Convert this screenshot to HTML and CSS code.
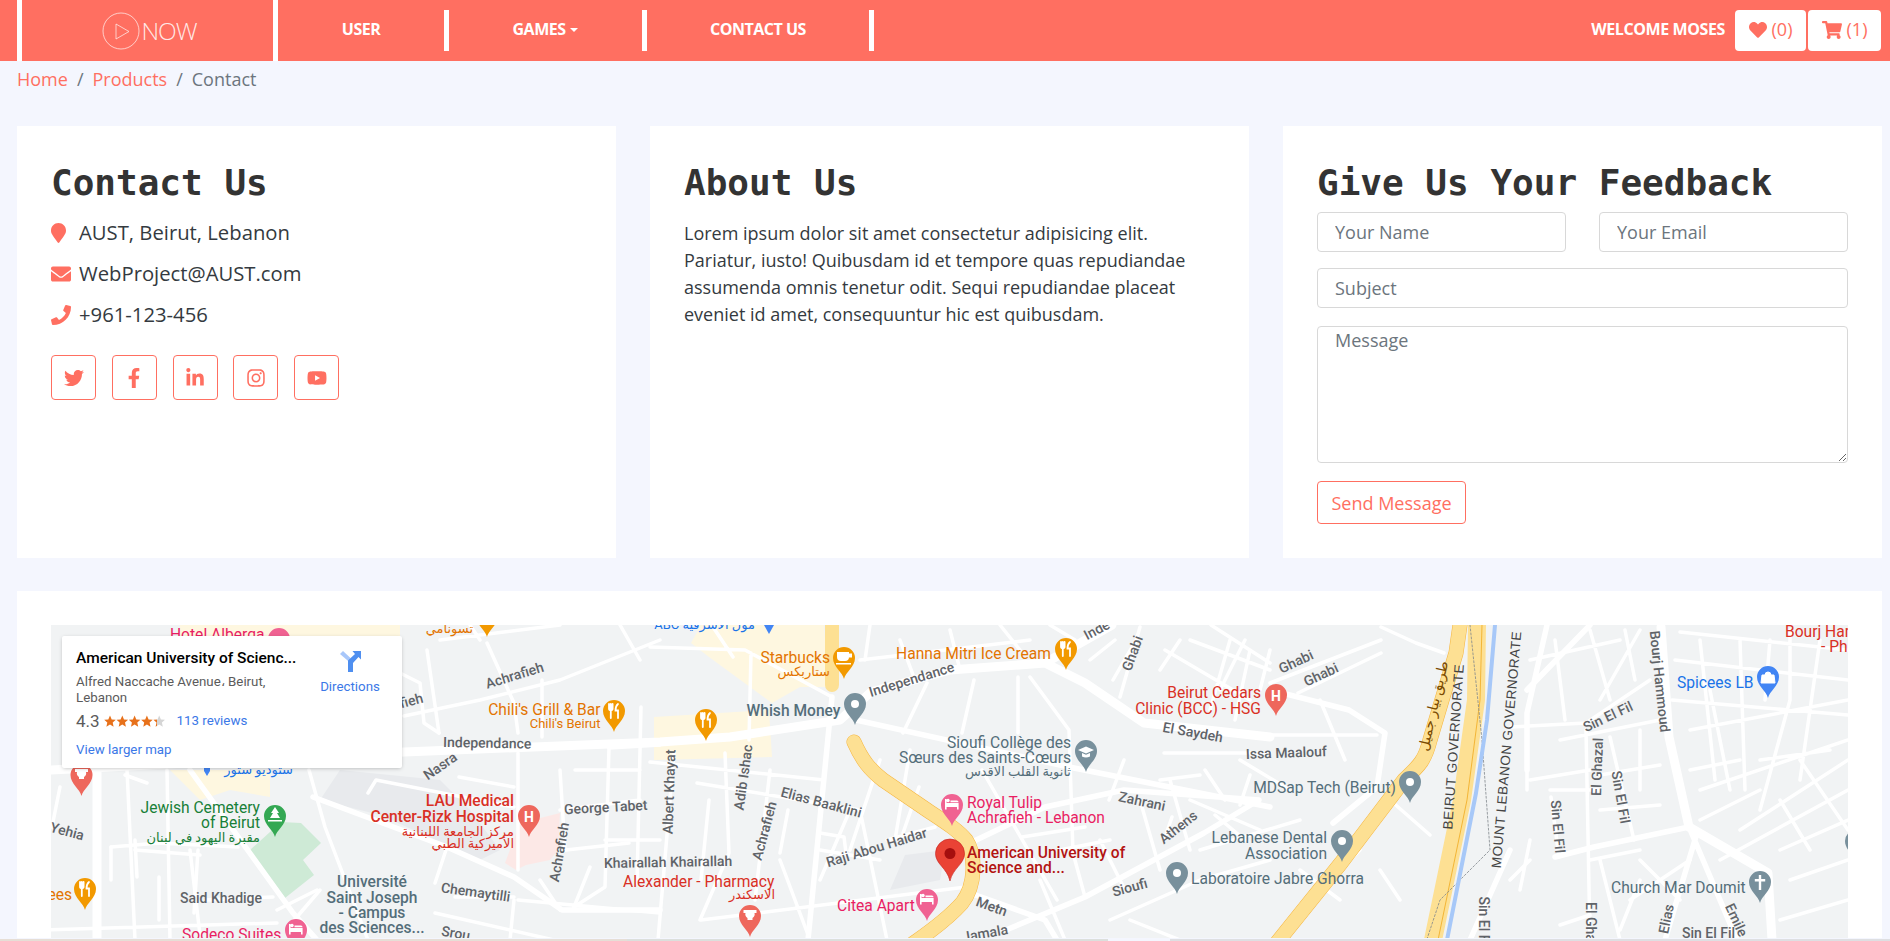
FILE: index.html
```html
<!DOCTYPE html>
<html lang="en">
<head>
    <meta charset="UTF-8">
    <meta name="viewport" content="width=device-width, initial-scale=1.0">
    <title>Contact</title>
    <link rel="stylesheet" href="styles.css">
</head>
<body>
    <svg class="defs" width="0" height="0">
        <symbol id="i-heart" viewBox="0 0 512 512"><path d="M462.3 62.6C407.5 15.9 326 24.3 275.7 76.2L256 96.5l-19.7-20.3C186.1 24.3 104.5 15.9 49.7 62.6c-62.8 53.6-66.1 149.8-9.9 207.9l193.5 199.8c12.5 12.9 32.8 12.9 45.3 0l193.5-199.8c56.3-58.1 53-154.3-9.8-207.9z"/></symbol>
        <symbol id="i-cart" viewBox="0 0 576 512"><path d="M528.12 301.319l47.273-208C578.806 78.301 567.391 64 551.99 64H159.208l-9.166-44.81C147.758 8.021 137.93 0 126.529 0H24C10.745 0 0 10.745 0 24v16c0 13.255 10.745 24 24 24h69.883l70.248 343.435C147.325 417.1 136 435.222 136 456c0 30.928 25.072 56 56 56s56-25.072 56-56c0-15.674-6.447-29.835-16.824-40h209.647C430.447 426.165 424 440.326 424 456c0 30.928 25.072 56 56 56s56-25.072 56-56c0-22.172-12.888-41.332-31.579-50.405l5.517-24.276c3.413-15.018-8.002-29.319-23.403-29.319H218.117l-6.545-32h293.145c11.206 0 20.92-7.754 23.403-18.681z"/></symbol>
        <symbol id="i-marker" viewBox="0 0 384 512"><path d="M172.268 501.67C26.97 291.031 0 268.413 0 192 0 85.961 85.961 0 192 0s192 85.961 192 192c0 76.413-26.97 99.031-172.268 309.67-9.535 13.774-29.93 13.773-39.464 0z"/></symbol>
        <symbol id="i-envelope" viewBox="0 0 512 512"><path d="M502.3 190.8c3.9-3.1 9.7-.2 9.7 4.7V400c0 26.5-21.5 48-48 48H48c-26.5 0-48-21.5-48-48V195.6c0-5 5.7-7.8 9.7-4.7 22.4 17.4 52.1 39.5 154.1 113.6 21.1 15.4 56.7 47.8 92.2 47.6 35.7.3 72-32.8 92.3-47.6 102-74.1 131.6-96.3 154-113.7zM256 320c23.2.4 56.6-29.2 73.4-41.4 132.7-96.3 142.8-104.7 173.4-128.7 5.8-4.5 9.2-11.5 9.2-18.9v-19c0-26.5-21.5-48-48-48H48C21.5 64 0 85.5 0 112v19c0 7.4 3.4 14.3 9.2 18.9 30.6 23.9 40.7 32.4 173.4 128.7 16.8 12.2 50.2 41.8 73.4 41.4z"/></symbol>
        <symbol id="i-phone" viewBox="0 0 512 512"><path d="M493.4 24.6l-104-24c-11.3-2.6-22.9 3.3-27.5 13.9l-48 112c-4.2 9.8-1.4 21.3 6.9 28l60.6 49.6c-36 76.7-98.9 140.5-177.2 177.2l-49.6-60.6c-6.8-8.3-18.2-11.1-28-6.9l-112 48C3.9 366.5-2 378.1.6 389.4l24 104C27.1 504.2 36.7 512 48 512c256.1 0 464-207.5 464-464 0-11.2-7.7-20.9-18.6-23.4z"/></symbol>
        <symbol id="i-twitter" viewBox="0 0 512 512"><path d="M459.37 151.716c.325 4.548.325 9.097.325 13.645 0 138.72-105.583 298.558-298.558 298.558-59.452 0-114.68-17.219-161.137-47.106 8.447.974 16.568 1.299 25.34 1.299 49.055 0 94.213-16.568 130.274-44.832-46.132-.975-84.792-31.188-98.112-72.772 6.498.974 12.995 1.624 19.818 1.624 9.421 0 18.843-1.3 27.614-3.573-48.081-9.747-84.143-51.98-84.143-102.985v-1.299c13.969 7.797 30.214 12.67 47.431 13.319-28.264-18.843-46.781-51.005-46.781-87.391 0-19.492 5.197-37.36 14.294-52.954 51.655 63.675 129.3 105.258 216.365 109.807-1.624-7.797-2.599-15.918-2.599-24.04 0-57.828 46.782-104.934 104.934-104.934 30.213 0 57.502 12.67 76.67 33.137 23.715-4.548 46.456-13.32 66.599-25.34-7.798 24.366-24.366 44.833-46.132 57.827 21.117-2.273 41.584-8.122 60.426-16.243-14.292 20.791-32.161 39.308-52.628 54.253z"/></symbol>
        <symbol id="i-facebook" viewBox="0 0 320 512"><path d="M279.14 288l14.22-92.66h-88.91v-60.13c0-25.35 12.42-50.06 52.24-50.06h40.42V6.26S260.43 0 225.36 0c-73.22 0-121.08 44.38-121.08 124.72v70.62H22.89V288h81.39v224h100.17V288z"/></symbol>
        <symbol id="i-linkedin" viewBox="0 0 448 512"><path d="M100.28 448H7.4V148.9h92.88zM53.79 108.1C24.09 108.1 0 83.5 0 53.8a53.79 53.79 0 0 1 107.58 0c0 29.7-24.1 54.3-53.79 54.3zM447.9 448h-92.68V302.4c0-34.7-.7-79.2-48.29-79.2-48.29 0-55.69 37.7-55.69 76.7V448h-92.78V148.9h89.08v40.8h1.3c12.4-23.5 42.69-48.3 87.88-48.3 94 0 111.28 61.9 111.28 142.3V448z"/></symbol>
        <symbol id="i-instagram" viewBox="0 0 448 512"><path d="M224.1 141c-63.6 0-114.9 51.3-114.9 114.9s51.3 114.9 114.9 114.9S339 319.5 339 255.9 287.7 141 224.1 141zm0 189.6c-41.1 0-74.7-33.5-74.7-74.7s33.5-74.7 74.7-74.7 74.7 33.5 74.7 74.7-33.6 74.7-74.7 74.7zm146.4-194.3c0 14.9-12 26.8-26.8 26.8-14.9 0-26.8-12-26.8-26.8s12-26.8 26.8-26.8 26.8 12 26.8 26.8zm76.1 27.2c-1.7-35.9-9.9-67.7-36.2-93.9-26.2-26.2-58-34.4-93.9-36.2-37-2.1-147.9-2.1-184.9 0-35.8 1.7-67.6 9.9-93.9 36.1s-34.4 58-36.2 93.9c-2.1 37-2.1 147.9 0 184.9 1.7 35.9 9.9 67.7 36.2 93.9s58 34.4 93.9 36.2c37 2.1 147.9 2.1 184.9 0 35.9-1.7 67.7-9.9 93.9-36.2 26.2-26.2 34.4-58 36.2-93.9 2.1-37 2.1-147.8 0-184.8zM398.8 388c-7.8 19.6-22.9 34.7-42.6 42.6-29.5 11.7-99.5 9-132.1 9s-102.7 2.6-132.1-9c-19.6-7.8-34.7-22.9-42.6-42.6-11.7-29.5-9-99.5-9-132.1s-2.6-102.7 9-132.1c7.8-19.6 22.9-34.7 42.6-42.6 29.5-11.7 99.5-9 132.1-9s102.7-2.6 132.1 9c19.6 7.8 34.7 22.9 42.6 42.6 11.7 29.5 9 99.5 9 132.1s2.7 102.7-9 132.1z"/></symbol>
        <symbol id="i-youtube" viewBox="0 0 576 512"><path d="M549.655 124.083c-6.281-23.65-24.787-42.276-48.284-48.597C458.781 64 288 64 288 64S117.22 64 74.629 75.486c-23.497 6.322-42.003 24.947-48.284 48.597-11.412 42.867-11.412 132.305-11.412 132.305s0 89.438 11.412 132.305c6.281 23.65 24.787 41.5 48.284 47.821C117.22 448 288 448 288 448s170.78 0 213.371-11.486c23.497-6.321 42.003-24.171 48.284-47.821 11.412-42.867 11.412-132.305 11.412-132.305s0-89.438-11.412-132.305zm-317.51 213.508V175.185l142.739 81.205-142.739 81.201z"/></symbol>
    </svg>

    <nav class="topbar">
        <a class="brand" href="#">
            <svg class="brand-mark" viewBox="0 0 38 40"><circle cx="19" cy="20" r="18"/><path d="M14 13l13 7.500-13 7.500z"/></svg>
            <span class="brand-name">NOW</span>
        </a>
        <a class="nav-link nav-user" href="#">USER</a>
        <a class="nav-link nav-games" href="#">GAMES<span class="caret"></span></a>
        <a class="nav-link nav-contact" href="#">CONTACT US</a>
        <div class="nav-right">
            <span class="welcome">WELCOME MOSES</span>
            <a class="count-btn heart-btn" href="#"><svg class="ico-18"><use href="#i-heart"/></svg> (0)</a>
            <a class="count-btn cart-btn" href="#"><svg class="ico-cart"><use href="#i-cart"/></svg> (1)</a>
        </div>
    </nav>

    <div class="crumbs">
        <a href="#">Home</a><span class="sep">/</span><a href="#">Products</a><span class="sep">/</span><span class="now">Contact</span>
    </div>

    <main class="content">
        <section class="cards">
            <div class="card">
                <h2>Contact Us</h2>
                <div class="info-row"><span class="info-ico"><svg class="ico-marker"><use href="#i-marker"/></svg></span>AUST, Beirut, Lebanon</div>
                <div class="info-row"><span class="info-ico"><svg class="ico-20"><use href="#i-envelope"/></svg></span>WebProject@AUST.com</div>
                <div class="info-row"><span class="info-ico"><svg class="ico-20"><use href="#i-phone"/></svg></span>+961-123-456</div>
                <div class="socials">
                    <a href="#"><svg class="ico-20"><use href="#i-twitter"/></svg></a>
                    <a href="#"><svg class="ico-20"><use href="#i-facebook"/></svg></a>
                    <a href="#"><svg class="ico-20"><use href="#i-linkedin"/></svg></a>
                    <a href="#"><svg class="ico-20"><use href="#i-instagram"/></svg></a>
                    <a href="#"><svg class="ico-20"><use href="#i-youtube"/></svg></a>
                </div>
            </div>
            <div class="card">
                <h2>About Us</h2>
                <p class="about">Lorem ipsum dolor sit amet consectetur adipisicing elit. Pariatur, iusto! Quibusdam id et tempore quas repudiandae assumenda omnis tenetur odit. Sequi repudiandae placeat eveniet id amet, consequuntur hic est quibusdam.</p>
            </div>
            <div class="card">
                <h2>Give Us Your Feedback</h2>
                <form class="feedback">
                    <div class="two-col">
                        <input type="text" placeholder="Your Name">
                        <input type="text" placeholder="Your Email">
                    </div>
                    <input type="text" placeholder="Subject">
                    <textarea placeholder="Message"></textarea>
                    <button type="button">Send Message</button>
                </form>
            </div>
        </section>

        <section class="map-card">
            <div class="map">
                <svg class="map-svg" viewBox="51 625 1797 314" width="1797" height="314">
                    <defs>
                        <path id="pin" d="M0 20C-1.500 13-11 8-11-1A11 11 0 1 1 11-1C11 8 1.500 13 0 20Z"/>
                        <g id="food" fill="none" stroke="#fff" stroke-width="1.800" stroke-linecap="round"><path d="M-5-7v4.500q0 2 1.800 2v7.500M-3.200-7v5M-1.400-7v4.500q0 2-1.800 2M4-7q-2.500 2-2.500 6.500h2.500v7.500"/></g>
                        <g id="bed" fill="#fff"><path d="M-7-6h1.600v4h12v6.500h-1.600v-2.500h-10.400v2.500h-1.600zM-4-2.800a1.700 1.700 0 1 1 .1 0zM-1.500-4.500h6.500a2 2 0 0 1 1.600 1.700h-8.100z"/></g>
                    </defs>
                    <rect x="51" y="625" width="1797" height="314" fill="#f1f3f4"/>
                    <path class="area-cream" d="M691 643L701 625H824L828 687H800L772 703 709 657ZM654 717L769 710 772 757 654 760ZM170 770H270V797L230 790 200 800ZM180 625H400V640H180Z"/>
                    <path class="area-park" d="M250 850L281 822 301 823 321 843 303 860 314 875 285 898Z"/>
                    <path class="area-hosp" d="M505 863L520 823 560 813 558 850 550 860 526 865 516 870Z"/>
                    <path class="area-grey" d="M320 800L340 770 440 780 470 810 500 850 480 860 380 815ZM905 855L945 850 940 880 890 890Z"/>

                    <path class="st-sm" d="M111 847L159 843 238 847M127 770L135 940M167 770L170 940M309 770L325 827 368 940M368 793L376 780 514 807M447 847L435 883M609 748L605 887 574 907M427 650L439 733M487 643L514 703 518 733M542 680V737M641 707L637 883M514 900L510 940M435 913L554 940M40 930L277 923M60 787L52 827M135 850L200 855M190 850L200 935M320 890L290 925M518 753V870M560 770L565 850M560 810L640 800M575 770H640M605 840H660M540 880L560 910M470 625L480 640M440 640L560 625M620 625L640 660"/>
                    <path class="st-sm" d="M125 775L147 783M159 877V920M111 847V880M135 840L137 877M198 850L194 913M206 900L273 897M277 910L317 890M459 777L514 787M400 673L420 683 424 723 439 733M455 897H514M518 900L660 913M609 748L660 745M590 867L574 907M566 850L629 843M404 716L480 700 560 680 660 640"/>
                    <path class="st-sm" d="M650 647L745 650 832 697M751 653L749 740M713 627L733 657M650 762L824 780M697 783L860 810 887 940M674 753L658 940M725 753L729 853 700 920M770 770L755 900M701 920L966 887M974 680L962 733M927 683L903 733M1018 677V733M1030 677L1069 730 1073 853M982 770L1057 900M1124 760L1109 800M1164 753H1270M1113 680L1136 640M1140 627L1120 697M1211 625L1270 663M1000 625L1020 650M1050 625L1075 640M860 660L1030 640M870 625L865 660M1165 650L1250 700M1190 640L1270 670M1230 640L1210 710M1250 650L1235 720M880 760L850 850M910 750L895 840M850 810L820 880M820 850L880 860M1100 840L1125 890M1140 800L1160 870M1170 780L1190 850M1190 800L1260 830M1200 850L1300 820M1110 920L1200 880 1270 860M1130 920L1180 940M1060 850L1110 840M1040 880L1065 940M780 860L810 940"/>
                    <path class="st-sm" d="M709 800L701 880M788 810L780 853M820 833L844 837 846 853M919 787L903 833M887 840L935 827M1022 837L1085 827M1073 853L1085 897M1172 817L1164 840M1160 780L1200 775M1215 815L1245 840M1205 770L1225 800M1240 805L1250 775M1220 690L1245 640M1180 640L1160 670M1260 690L1270 650M900 640L915 680M950 630L960 670M1090 660L1115 640"/>
                    <path class="st-sm" d="M1381 627L1416 643 1444 653M1270 683L1381 640M1298 693L1381 653M1270 735H1377M1320 700L1345 760M1390 800L1430 835M1240 760L1290 790M1300 870L1340 900M1380 870L1400 900M1360 850L1330 880M1511 727L1586 723 1650 680M1551 797L1559 857M1586 730L1590 940M1610 737L1634 840M1527 770V790M1530 660L1620 640M1640 630L1600 700M1555 640L1565 720M1590 630L1610 700M1625 630L1635 680M1560 740L1660 720M1530 780L1590 770M1600 775L1660 765M1600 810L1660 805M1590 860L1640 850M1640 860L1680 900M1630 900L1690 860M1560 925L1590 915M1550 790L1600 790M1640 730V790"/>
                    <path class="st-sm" d="M1680 632L1848 650M1675 660L1848 680M1672 700L1848 715M1690 730L1848 700M1700 640L1715 780M1740 640L1745 790M1790 630V700L1760 810M1820 640L1800 780M1700 790L1848 740M1720 860L1848 790M1740 830L1848 760M1780 800L1810 850M1800 760L1848 830M1790 880L1848 860M1780 920L1848 900M1710 690L1730 790M1770 640L1765 700M1690 770L1740 760M1760 760L1830 750M1700 820L1760 790M1780 850L1848 820M1600 860L1620 940M1640 880L1620 930M1510 880L1530 860M1530 840L1520 890"/>
                    <path class="st-md" d="M190 770L293 913 317 940M313 797L447 847 514 877 562 910 660 910M856 720L1069 767 1270 807M832 697L808 940M970 843L1045 807 1124 790 1259 800 1204 833 1085 897 1006 930M970 893L1045 920 1057 940M1270 690L1349 710 1385 733 1377 787 1333 823M1527 713V770M1689 827L1737 940M1697 833L1665 940M1689 827L1594 847 1555 857M1510 850L1470 940M1547 625L1527 713M1590 625L1527 690"/>
                    <path class="st-lg" d="M51 770L404 752 660 742 730 737 840 720 871 692 950 670 1045 663 1112 625M97 767V940M1045 663L1085 683 1144 723 1270 737M1661 627L1669 737 1689 827 1768 873 1772 940"/>

                    <path class="route-edge" d="M854 742C862 760 870 770 883 780L927 810C945 822 958 830 966 840 976 855 976 885 962 903 945 922 925 935 911 945M1275 945L1341 863 1404 780C1420 765 1425 760 1430 740L1456 653 1460 625"/>
                    <path class="route" d="M854 742C862 760 870 770 883 780L927 810C945 822 958 830 966 840 976 855 976 885 962 903 945 922 925 935 911 945M832 625V685M1275 945L1341 863 1404 780C1420 765 1425 760 1430 740L1456 653 1460 625"/>
                    <path class="route route-wide" d="M1432 945L1462 800 1476 700 1477 625"/>
                    <path class="route-line" d="M1437 945L1467 800 1480 700 1482 625"/>
                    <path class="border-dash" d="M1470 625L1482 740 1490 850 1440 900 1425 945"/>
                    <path class="river" d="M1446 945L1476 793 1487 720 1495 625"/>

                    <g class="lb-road">
                        <text x="443" y="747" transform="rotate(1 443 747)">Independance</text>
                        <text transform="translate(516 680) rotate(-17)" text-anchor="middle">Achrafieh</text>
                        <text transform="translate(395 710) rotate(-15)" text-anchor="middle">Achrafieh</text>
                        <text transform="translate(443 770) rotate(-35)" text-anchor="middle">Nasra</text>
                        <text transform="translate(66 836) rotate(15)" text-anchor="middle">Yehia</text>
                        <text x="180" y="903">Said Khadige</text>
                        <text transform="translate(606 812) rotate(-3)" text-anchor="middle">George Tabet</text>
                        <text transform="translate(564 853) rotate(-80)" text-anchor="middle">Achrafieh</text>
                        <text x="604" y="868" transform="rotate(-1 604 868)">Khairallah Khairallah</text>
                        <text transform="translate(475 897) rotate(8)" text-anchor="middle">Chemaytilli</text>
                        <text transform="translate(455 938) rotate(10)" text-anchor="middle">Srou</text>
                        <text transform="translate(913 684) rotate(-17)" text-anchor="middle">Independance</text>
                        <text transform="translate(1099 634) rotate(-28)" text-anchor="middle">Inde</text>
                        <text transform="translate(1137 655) rotate(-70)" text-anchor="middle">Ghabi</text>
                        <text transform="translate(1298 666) rotate(-25)" text-anchor="middle">Ghabi</text>
                        <text transform="translate(1323 679) rotate(-25)" text-anchor="middle">Ghabi</text>
                        <text transform="translate(1192 737) rotate(10)" text-anchor="middle">El Saydeh</text>
                        <text transform="translate(674 792) rotate(-88)" text-anchor="middle">Albert Khayat</text>
                        <text transform="translate(748 778) rotate(-82)" text-anchor="middle">Adib Ishac</text>
                        <text transform="translate(769 832) rotate(-75)" text-anchor="middle">Achrafieh</text>
                        <text transform="translate(820 807) rotate(15)" text-anchor="middle">Elias Baaklini</text>
                        <text x="1246" y="759" transform="rotate(-2 1246 759)">Issa Maalouf</text>
                        <text transform="translate(1141 806) rotate(12)" text-anchor="middle">Zahrani</text>
                        <text transform="translate(1181 831) rotate(-38)" text-anchor="middle">Athens</text>
                        <text transform="translate(878 852) rotate(-17)" text-anchor="middle">Raji Abou Haidar</text>
                        <text transform="translate(1131 892) rotate(-15)" text-anchor="middle">Sioufi</text>
                        <text transform="translate(990 911) rotate(20)" text-anchor="middle">Metn</text>
                        <text transform="translate(986 938) rotate(-10)" text-anchor="middle">Jamala</text>
                        <text transform="translate(1655 682) rotate(84)" text-anchor="middle">Bourj Hammoud</text>
                        <text transform="translate(1610 721) rotate(-25)" text-anchor="middle">Sin El Fil</text>
                        <text transform="translate(1602 767) rotate(-88)" text-anchor="middle">El Ghazal</text>
                        <text transform="translate(1616 798) rotate(80)" text-anchor="middle">Sin El Fil</text>
                        <text transform="translate(1553 827) rotate(85)" text-anchor="middle">Sin El Fil</text>
                        <text transform="translate(1671 920) rotate(-78)" text-anchor="middle">Elias</text>
                        <text transform="translate(1732 922) rotate(65)" text-anchor="middle">Emile</text>
                        <text transform="translate(1479 923) rotate(90)" text-anchor="middle">Sin El Fil</text>
                        <text transform="translate(1586 922) rotate(90)" text-anchor="middle">El Gha</text>
                        <text x="1682" y="938">Sin El Fil</text>
                    </g>
                    <g class="lb-gov">
                        <text transform="translate(1458 747) rotate(-86)" text-anchor="middle">BEIRUT GOVERNORATE</text>
                        <text transform="translate(1511 750) rotate(-85)" text-anchor="middle">MOUNT LEBANON GOVERNORATE</text>
                    </g>
                    <text class="lb-hwy" transform="translate(1438 707) rotate(-77)" text-anchor="middle">طريق بيار جميل</text>

                    <g class="lb-poi lb-slate">
                        <text x="840.500" y="716" text-anchor="end" class="lb-med">Whish Money</text>
                        <text x="1071" y="748" text-anchor="end">Sioufi Collège des</text>
                        <text x="1071" y="763" text-anchor="end">Sœurs des Saints-Cœurs</text>
                        <text x="1071" y="776" text-anchor="end" class="lb-small">ثانوية القلب الاقدس</text>
                        <text x="1396" y="793" text-anchor="end">MDSap Tech (Beirut)</text>
                        <text x="1327" y="843" text-anchor="end">Lebanese Dental</text>
                        <text x="1327" y="859" text-anchor="end">Association</text>
                        <text x="1191" y="884">Laboratoire Jabre Ghorra</text>
                        <text x="1611" y="893">Church Mar Doumit</text>
                        <text x="372" y="887" text-anchor="middle" class="lb-med">Université</text>
                        <text x="372" y="903" text-anchor="middle" class="lb-med">Saint Joseph</text>
                        <text x="372" y="918" text-anchor="middle" class="lb-med">- Campus</text>
                        <text x="372" y="933" text-anchor="middle" class="lb-med">des Sciences...</text>
                    </g>
                    <g class="lb-poi lb-orange">
                        <text x="600.500" y="715" text-anchor="end">Chili's Grill &amp; Bar</text>
                        <text x="600.500" y="728" text-anchor="end" class="lb-small">Chili's Beirut</text>
                        <text x="473" y="633" text-anchor="end" class="lb-small">تسونامي</text>
                        <text x="72" y="900" text-anchor="end">ees</text>
                        <text x="830" y="663" text-anchor="end">Starbucks</text>
                        <text x="830" y="676" text-anchor="end" class="lb-small">ستاربكس</text>
                        <text x="1051" y="659" text-anchor="end">Hanna Mitri Ice Cream</text>
                    </g>
                    <g class="lb-poi lb-pink">
                        <text x="170" y="640">Hotel Alberga</text>
                        <text x="182" y="940">Sodeco Suites</text>
                        <text x="967" y="808">Royal Tulip</text>
                        <text x="967" y="823">Achrafieh - Lebanon</text>
                        <text x="837" y="911">Citea Apart</text>
                    </g>
                    <g class="lb-poi lb-red">
                        <text x="514" y="806" text-anchor="end" class="lb-med">LAU Medical</text>
                        <text x="514" y="822" text-anchor="end" class="lb-med">Center-Rizk Hospital</text>
                        <text x="514" y="836" text-anchor="end" class="lb-small">مركز الجامعة اللبنانية</text>
                        <text x="514" y="848" text-anchor="end" class="lb-small">الأميركية الطبي</text>
                        <text x="623" y="887">Alexander - Pharmacy</text>
                        <text x="775" y="899" text-anchor="end" class="lb-small">الاسكندر</text>
                        <text x="1261" y="698" text-anchor="end">Beirut Cedars</text>
                        <text x="1261" y="714" text-anchor="end">Clinic (BCC) - HSG</text>
                        <text x="1785" y="637">Bourj Hammoud</text>
                        <text x="1821" y="652">- Pharmacy</text>
                    </g>
                    <g class="lb-poi lb-green">
                        <text x="260" y="813" text-anchor="end">Jewish Cemetery</text>
                        <text x="260" y="828" text-anchor="end">of Beirut</text>
                        <text x="260" y="842" text-anchor="end" class="lb-small">مقبرة اليهود في لبنان</text>
                    </g>
                    <g class="lb-poi lb-blue">
                        <text x="1677" y="688">Spicees LB</text>
                        <text x="755" y="629" text-anchor="end" class="lb-small">ABC مول الاشرفية</text>
                        <text x="293" y="774" text-anchor="end" class="lb-small">ستوديو ستور</text>
                    </g>
                    <text class="lb-poi lb-dark lb-med" x="967" y="858">American University of</text>
                    <text class="lb-poi lb-dark lb-med" x="967" y="873">Science and...</text>

                    <!-- pins -->
                    <g class="pin-orange">
                        <use href="#pin" x="487" y="617"/>
                        <use href="#pin" x="614" y="712"/><use href="#food" x="614" y="711"/>
                        <use href="#pin" x="85" y="890"/><use href="#food" x="85" y="889"/>
                        <use href="#pin" x="844" y="659"/><path d="M837 652h12v5q0 4-4 4h-4q-4 0-4-4zM849 653.500h3v4h-3zM836 663h15v1.500h-15z" fill="#fff"/>
                        <use href="#pin" x="1066" y="650"/><use href="#food" x="1066" y="649"/>
                        <use href="#pin" x="706" y="721"/><use href="#food" x="706" y="720"/>
                    </g>
                    <g class="pin-slate">
                        <use href="#pin" x="855" y="705"/><circle cx="855" cy="704" r="4" fill="#fff"/>
                        <use href="#pin" x="1086" y="752"/><path d="M1078 750l8-3.500 8 3.500-8 3.500zM1082 753v3.500q4 2 8 0V753l-4 1.800z" fill="#fff"/>
                        <use href="#pin" x="1177" y="874"/><circle cx="1177" cy="873" r="4" fill="#fff"/>
                        <use href="#pin" x="1410" y="783"/><circle cx="1410" cy="782" r="4" fill="#fff"/>
                        <use href="#pin" x="1342" y="842"/><circle cx="1342" cy="841" r="4" fill="#fff"/>
                        <use href="#pin" x="1760" y="883"/><path d="M1758.800 875h2.400v4h4v2.400h-4v8.600h-2.400v-8.600h-4v-2.400h4z" fill="#fff"/>
                        <use href="#pin" x="1856" y="842"/>
                    </g>
                    <g class="pin-pink">
                        <use href="#pin" x="279" y="640"/>
                        <use href="#pin" x="296" y="931"/><use href="#bed" x="296" y="930"/>
                        <use href="#pin" x="952" y="806"/><use href="#bed" x="952" y="805"/>
                        <use href="#pin" x="927" y="901"/><use href="#bed" x="927" y="900"/>
                    </g>
                    <g class="pin-red">
                        <use href="#pin" x="81.500" y="776"/><path d="M75 769h13v3h-2a4.500 4.500 0 0 1-2 5v2h-5v-2a4.500 4.500 0 0 1-2-5h-2z" fill="#fff"/>
                        <use href="#pin" x="750" y="917"/><path d="M743.500 910h13v3h-2a4.500 4.500 0 0 1-2 5v2h-5v-2a4.500 4.500 0 0 1-2-5h-2z" fill="#fff"/>
                        <use href="#pin" x="529" y="817"/><text class="pin-h" x="529" y="822" text-anchor="middle">H</text>
                        <use href="#pin" x="1276" y="696"/><text class="pin-h" x="1276" y="701" text-anchor="middle">H</text>
                    </g>
                    <use href="#pin" x="275" y="817" fill="#34a853"/>
                    <path d="M275 807l4 6h-2l3 5h-10l3-5h-2zM268 820h14v1.500h-14z" fill="#fff"/>
                    <use href="#pin" x="1768" y="678" fill="#4285f4"/>
                    <path d="M1762 675h12l1 8h-14zM1765 675a3 3 0 0 1 6 0" fill="#fff" stroke="#fff"/>
                    <path d="M204 765v6l3 5 3-5v-6z" fill="#4285f4"/>
                    <path d="M769 625h-5l5 9 5-9z" fill="#4285f4"/>
                    <!-- selected place -->
                    <path d="M950 881C947 868 935.500 864 935.500 853.500A14.500 14.500 0 1 1 964.500 853.500C964.500 864 953 868 950 881Z" fill="#ea4335" stroke="#c5221f" stroke-width=".6"/>
                    <circle cx="950" cy="853.500" r="5.500" fill="#a50e0e"/>
                </svg>

                <div class="place-box">
                    <div class="place-main">
                        <div class="place-title">American University of Scienc...</div>
                        <div class="place-addr">Alfred Naccache Avenue، Beirut, Lebanon</div>
                        <div class="place-rate">
                            <span class="rate-num">4.3</span>
                            <svg class="stars" viewBox="0 0 62 12">
                                <defs><linearGradient id="half"><stop offset="30%" stop-color="#e7711b"/><stop offset="30%" stop-color="#d5d5d5"/></linearGradient></defs>
                                <path id="star" d="M6 .500l1.700 3.900 4.100.4-3.100 2.800.9 4.100L6 9.500l-3.600 2.200.9-4.100L.2 4.800l4.100-.4z" fill="#e7711b"/>
                                <use href="#star" x="12.300"/><use href="#star" x="24.600"/><use href="#star" x="36.900"/>
                                <path d="M55.200.500l1.700 3.900 4.100.4-3.100 2.800.9 4.100-3.600-2.200-3.600 2.200.9-4.100-3.100-2.800 4.100-.4z" fill="url(#half)"/>
                            </svg>
                            <a class="map-link rev" href="#">113 reviews</a>
                        </div>
                        <a class="map-link larger" href="#">View larger map</a>
                    </div>
                    <a class="place-dir" href="#">
                        <svg class="dir-ico" viewBox="0 0 21 21"><path d="M0 3l3-3 7.500 7V12z" fill="#a8c7fa"/><path d="M8 21V9.500L15 3 12.500 0H21V8.500l-2.500-2.500L13 12v9z" fill="#4f8ff0"/></svg>
                        <span class="map-link">Directions</span>
                    </a>
                </div>
            </div>
        </section>
    </main>
    <div class="bottom-edge"></div>
</body>
</html>
```

FILE: styles.css
```css
* {
    box-sizing: border-box;
}
html, body {
    height: 100%;
}
body {
    font-family: "Open Sans", Arial, sans-serif;
    font-size: 18px;
    line-height: 27px;
    color: #343a40;
    background-color: #f4f6fe;
    margin: 0;
    padding: 0;
    overflow: hidden;
    position: relative;
}
a {
    text-decoration: none;
    color: inherit;
}
.defs {
    position: absolute;
}
svg {
    fill: currentColor;
}

/* barre du haut */
.topbar {
    background-color: #ff6f61;
    height: 61px;
    display: flex;
    align-items: center;
    padding: 0 9px 0 17px;
    color: #fff;
}
.brand {
    align-self: stretch;
    width: 261px;
    border-left: 5px solid #fff;
    border-right: 5px solid #fff;
    display: flex;
    align-items: center;
    justify-content: center;
}
.brand-mark {
    width: 38px;
    height: 40px;
    fill: none;
    stroke: rgba(255, 255, 255, 0.65);
    stroke-width: 1;
    margin-left: 4px;
}
.brand-name {
    font-size: 24.500px;
    font-weight: 300;
    letter-spacing: -1px;
    margin-left: 1px;
    color: rgba(255, 255, 255, 0.85);
}
.nav-link {
    height: 41px;
    border-right: 5px solid #fff;
    display: flex;
    align-items: center;
    justify-content: center;
    padding-bottom: 2px;
    font-size: 16px;
    font-weight: 700;
    letter-spacing: -0.5px;
}
.nav-user {
    width: 171px;
}
.nav-games {
    width: 198px;
}
.nav-contact {
    width: 227px;
}
.caret {
    border-top: 4px solid #fff;
    border-left: 4px solid transparent;
    border-right: 4px solid transparent;
    margin-left: 5px;
}
.nav-right {
    margin-left: auto;
    display: flex;
    align-items: center;
}
.welcome {
    font-size: 16px;
    font-weight: 700;
    letter-spacing: -0.4px;
    margin-right: 10px;
    padding-bottom: 2px;
}
.count-btn {
    height: 41px;
    background-color: #fff;
    color: #ff6f61;
    border-radius: 4px;
    display: flex;
    align-items: center;
    justify-content: center;
    gap: 5px;
    padding-bottom: 2px;
}
.heart-btn {
    width: 71px;
    margin-right: 2px;
}
.cart-btn {
    width: 73px;
}
.ico-18 {
    width: 18px;
    height: 18px;
}
.ico-cart {
    width: 20px;
    height: 18px;
}

/* fil d'ariane */
.crumbs {
    height: 65px;
    padding: 5px 0 0 17px;
    color: #6c757d;
}
.crumbs a {
    color: #ff6f61;
}
.crumbs .sep {
    padding: 0 9px;
}

/* cartes */
.content {
    padding: 0 8px 0 17px;
}
.cards {
    display: grid;
    grid-template-columns: repeat(3, 1fr);
    gap: 34px;
}
.card {
    background-color: #fff;
    padding: 35px 34px 34px 34px;
    height: 432px;
}
h2 {
    font-family: "DejaVu Sans Mono", "Liberation Mono", monospace;
    font-size: 36px;
    font-weight: 700;
    line-height: 43px;
    color: #333;
    margin: 0 0 8px 0;
}
.info-row {
    height: 41px;
    display: flex;
    align-items: center;
    font-size: 20.250px;
}
.info-ico {
    width: 28px;
    display: flex;
    color: #ff6f61;
}
.ico-marker {
    width: 15px;
    height: 20px;
}
.ico-20 {
    width: 20px;
    height: 20px;
}
.socials {
    display: flex;
    gap: 15.750px;
    margin-top: 20px;
}
.socials a {
    width: 45px;
    height: 45px;
    border: 1px solid #ff6f61;
    border-radius: 4px;
    color: #ff6f61;
    display: flex;
    align-items: center;
    justify-content: center;
}
.about {
    margin: 16px 0 0 0;
}
.feedback {
    display: flex;
    flex-direction: column;
    align-items: flex-start;
}
.two-col {
    width: 100%;
    display: grid;
    grid-template-columns: 1fr 1fr;
    gap: 33px;
    margin-bottom: 16px;
}
input, textarea {
    width: 100%;
    font-family: inherit;
    font-size: 18px;
    color: #495057;
    height: 40px;
    padding: 0 17px;
    border: 1px solid #d8d8d8;
    border-radius: 4px;
    background: #fff;
    outline: none;
}
::placeholder {
    color: #6c757d;
    opacity: 1;
}
textarea {
    height: 137px;
    margin-top: 18px;
    padding-top: 0;
    line-height: 27px;
    display: block;
}
.feedback button {
    width: 149px;
    height: 43px;
    margin-top: 18px;
    font-family: inherit;
    font-size: 18px;
    color: #ff6f61;
    background-color: #fff;
    border: 1px solid #ff6f61;
    border-radius: 4px;
    padding: 0;
    cursor: pointer;
}

/* carte google */
.map-card {
    background-color: #fff;
    margin-top: 33px;
    padding: 34px 34px 0 34px;
    height: 347px;
}
.map {
    position: relative;
    height: 313px;
    overflow: hidden;
}
.map-svg {
    display: block;
    font-family: Roboto, "DejaVu Sans", sans-serif;
}
.area-cream {
    fill: #fef7e0;
}
.area-park {
    fill: #ceead6;
}
.area-hosp {
    fill: #fce8e6;
}
.area-grey {
    fill: #e8eaed;
}
.st-sm, .st-md, .st-lg, .route, .route-edge, .route-line, .river, .border-dash {
    fill: none;
    stroke-linejoin: round;
    stroke-linecap: round;
}
.st-sm {
    stroke: #fff;
    stroke-width: 3.500;
}
.st-md {
    stroke: #fff;
    stroke-width: 5.500;
}
.st-lg {
    stroke: #fff;
    stroke-width: 9;
}
.route-edge {
    stroke: #f5b53f;
    stroke-width: 15;
}
.route {
    stroke: #fde093;
    stroke-width: 14;
}
.route-wide {
    stroke-width: 18;
}
.route-line {
    stroke: #f0a91e;
    stroke-width: 0.800;
}
.river {
    stroke: #a7c8f8;
    stroke-width: 4;
}
.border-dash {
    stroke: #80868b;
    stroke-width: 0.800;
    stroke-dasharray: 2 2;
}
.lb-road {
    font-size: 14px;
    fill: #5f6368;
    font-weight: 500;
}
.lb-gov {
    font-family: "Liberation Sans", Arial, sans-serif;
    font-size: 13.500px;
    fill: #444;
    font-weight: 400;
    letter-spacing: 0.500px;
}
.lb-hwy {
    font-size: 14px;
    fill: #7a4a00;
}
.lb-poi {
    font-size: 15.600px;
}
.lb-small {
    font-size: 13px;
}
.lb-med {
    font-weight: 500;
}
.lb-slate {
    fill: #546e7a;
}
.lb-orange {
    fill: #e37400;
}
.lb-pink {
    fill: #e91e63;
}
.lb-red {
    fill: #d93025;
}
.lb-green {
    fill: #188038;
}
.lb-blue {
    fill: #1a73e8;
}
.lb-dark {
    fill: #b31412;
}
.pin-orange {
    fill: #f29900;
}
.pin-slate {
    fill: #78909c;
}
.pin-pink {
    fill: #f06292;
}
.pin-red {
    fill: #ee675c;
}
.pin-h {
    font-size: 14px;
    font-weight: 700;
    fill: #fff;
}
.place-box {
    position: absolute;
    left: 11px;
    top: 11px;
    width: 340px;
    height: 132px;
    background-color: #fff;
    border-radius: 2px;
    box-shadow: 0 1px 4px -1px rgba(0, 0, 0, 0.3);
    display: flex;
    font-family: Roboto, Arial, sans-serif;
    font-size: 13.300px;
    line-height: 16px;
    color: #5b5b5b;
    padding: 13px 14px;
}
.place-main {
    width: 200px;
}
.place-title {
    font-size: 15.500px;
    font-weight: 500;
    color: #000;
    line-height: 19px;
    margin-bottom: 6px;
    white-space: nowrap;
}
.place-rate {
    display: flex;
    align-items: center;
    margin-top: 3px;
    height: 24px;
}
.rate-num {
    font-size: 17px;
}
.stars {
    flex: none;
    width: 62px;
    height: 12px;
    margin-left: 4px;
}
.map-link {
    color: #3b78e7;
    white-space: nowrap;
}
.rev {
    margin-left: 11px;
}
.larger {
    display: block;
    margin-top: 9px;
}
.place-dir {
    margin-left: 39px;
    padding-top: 2px;
    width: 70px;
    display: flex;
    flex-direction: column;
    align-items: center;
}
.dir-ico {
    width: 21px;
    height: 21px;
    margin-bottom: 7px;
}
.bottom-edge {
    position: absolute;
    left: 0;
    right: 0;
    bottom: 0;
    height: 2px;
    background: linear-gradient(90deg, #e6ded6 0, #e6ded6 627px, #dcdfdc 627px, #dcdfdc 1108px, #f4f6fe 1108px, #f4f6fe 1170px, #dedfe2 1170px);
}
```
